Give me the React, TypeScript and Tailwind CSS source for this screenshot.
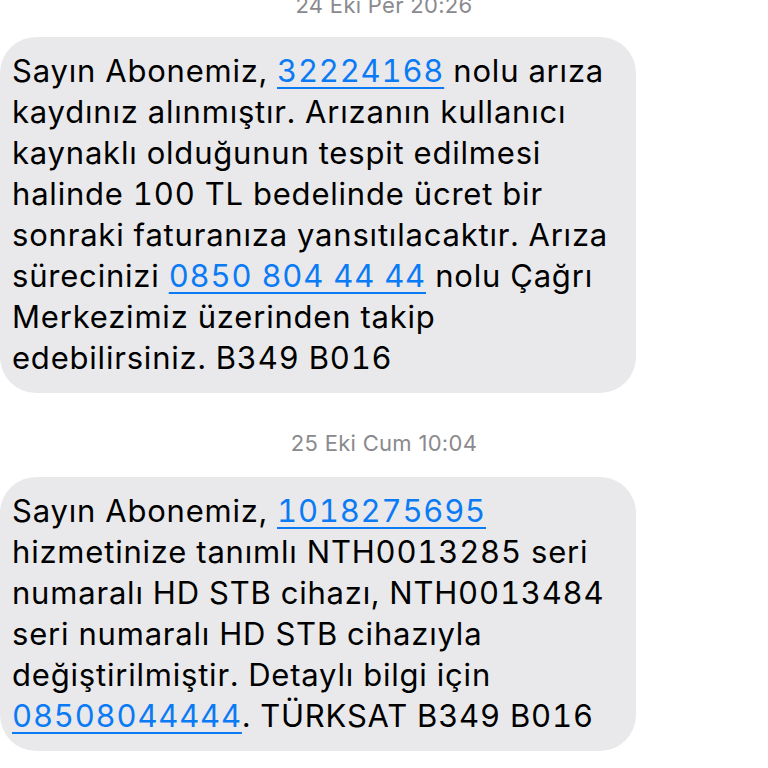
import React from 'react';

const Link = ({ children }: { children: React.ReactNode }) => (
  <span className="text-[#0b7bf5] underline decoration-[2px] underline-offset-[5px]">{children}</span>
);

const Stamp = ({ children, className = '' }: { children: React.ReactNode; className?: string }) => (
  <div className={`text-center text-[22px] leading-[24px] tracking-[0.3px] text-[#8a8a8e] ${className}`}>{children}</div>
);

export default function App() {
  return (
    <div className="h-[768px] w-[768px] overflow-hidden bg-white font-['Inter',sans-serif]">
      <Stamp className="-mt-[7px]">24 Eki Per 20:26</Stamp>

      <div className="mt-[20px] w-[636px] rounded-[36px] bg-[#e9e9eb] pl-[12px] pt-[13px] pb-[15px] text-[31px] leading-[41px] tracking-[0.8px] tabular-nums text-black">
        Sayın Abonemiz, <Link>32224168</Link> nolu arıza
        <br />
        kaydınız alınmıştır. Arızanın kullanıcı
        <br />
        kaynaklı olduğunun tespit edilmesi
        <br />
        halinde 100 TL bedelinde ücret bir
        <br />
        sonraki faturanıza yansıtılacaktır. Arıza
        <br />
        sürecinizi <Link>0850 804 44 44</Link> nolu Çağrı
        <br />
        Merkezimiz üzerinden takip
        <br />
        edebilirsiniz. B349 B016
      </div>

      <Stamp className="mt-[38px]">25 Eki Cum 10:04</Stamp>

      <div className="mt-[22px] w-[636px] rounded-[36px] bg-[#e9e9eb] pl-[12px] pt-[13px] pb-[15px] text-[31px] leading-[41px] tracking-[0.8px] tabular-nums text-black">
        Sayın Abonemiz, <Link>1018275695</Link>
        <br />
        hizmetinize tanımlı NTH0013285 seri
        <br />
        numaralı HD STB cihazı, NTH0013484
        <br />
        seri numaralı HD STB cihazıyla
        <br />
        değiştirilmiştir. Detaylı bilgi için
        <br />
        <Link>08508044444</Link>. TÜRKSAT B349 B016
      </div>
    </div>
  );
}
